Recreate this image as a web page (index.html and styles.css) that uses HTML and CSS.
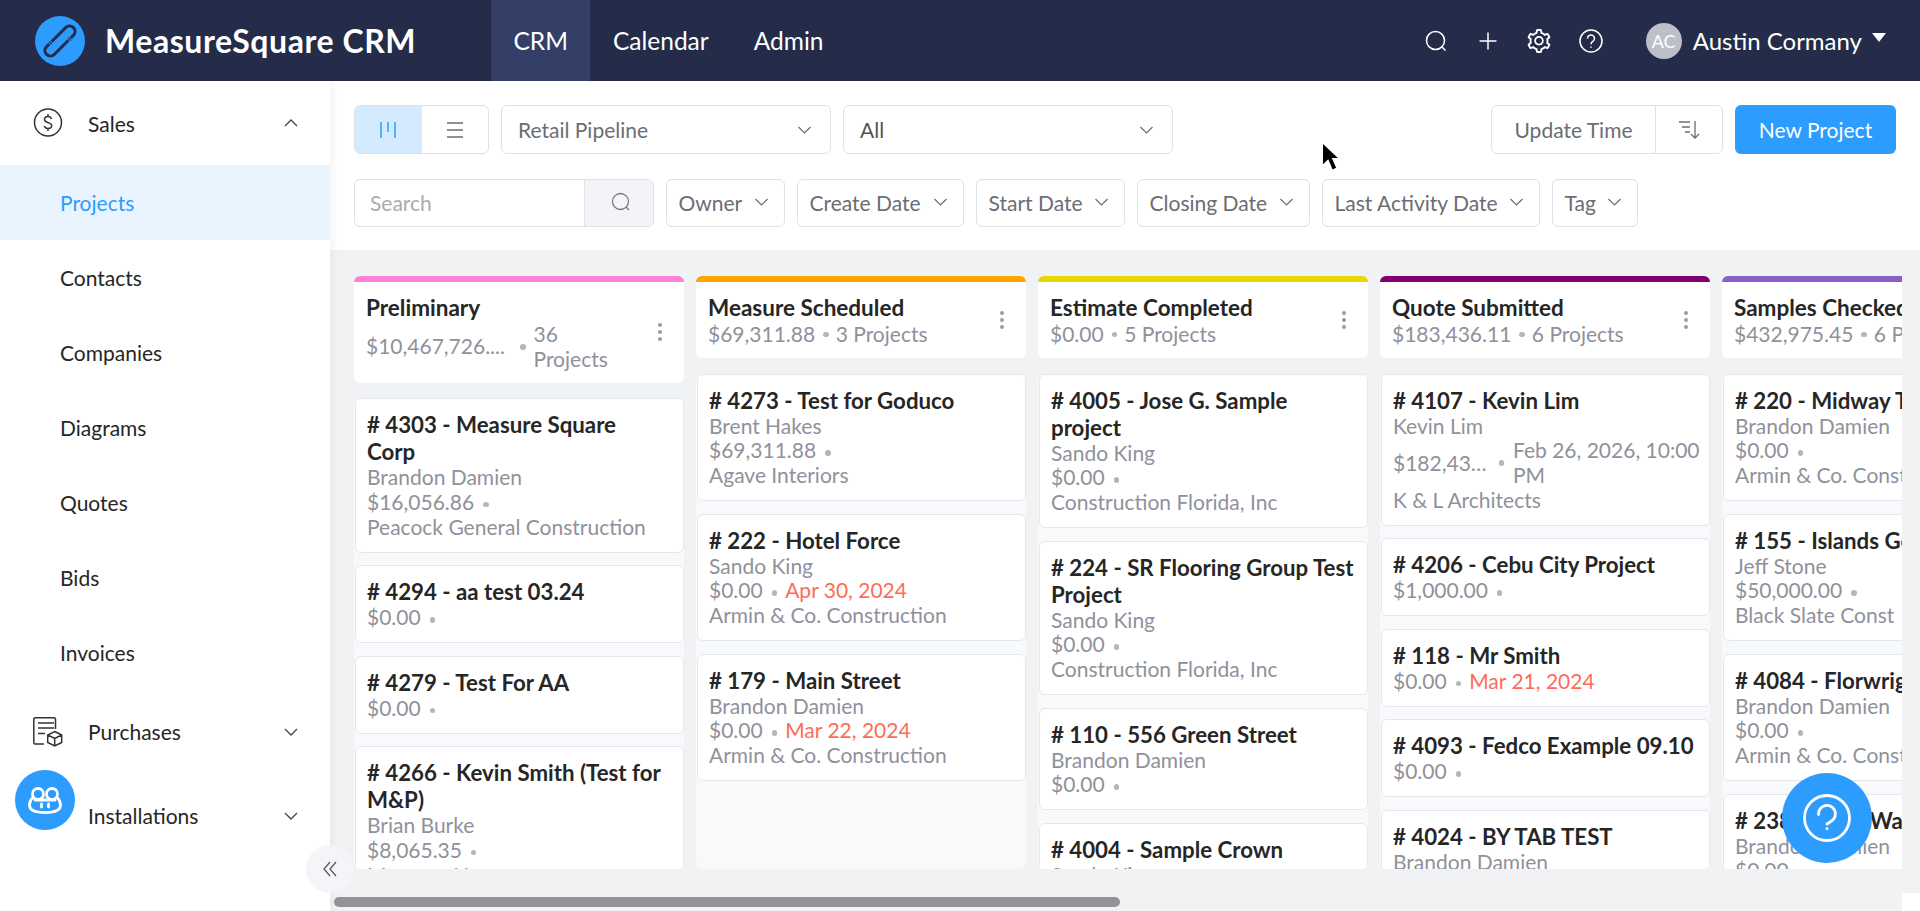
FILE: index.html
```html
<!DOCTYPE html>
<html lang="en">
<head>
<meta charset="utf-8">
<title>MeasureSquare CRM</title>
<link rel="stylesheet" href="styles.css">
</head>
<body>
<header class="topbar">
  <div class="brand">
    <span class="brand-logo">
      <svg viewBox="0 0 50 50" width="50" height="50"><circle cx="25" cy="25" r="25" fill="#2d9cff"/><g transform="translate(25 25) rotate(-45)" fill="none" stroke="#232c4a" stroke-width="3"><path d="M-9.500 -5.500H-13.500a5.500 5.500 0 0 0 0 11H6.500"/><path d="M9.500 5.500H13.500a5.500 5.500 0 0 0 0-11H-6.500"/><path d="M-8 -7.500v4M8 3.500v4" stroke-width="1.300"/></g></svg>
    </span>
    <span class="brand-name">MeasureSquare CRM</span>
  </div>
  <nav class="topnav">
    <a class="topnav-item is-active">CRM</a>
    <a class="topnav-item">Calendar</a>
    <a class="topnav-item">Admin</a>
  </nav>
  <div class="top-actions">
    <svg class="top-icon" viewBox="0 0 24 24"><circle cx="11.500" cy="11.500" r="9"/><path d="M18 18l3.500 3.500"/></svg>
    <svg class="top-icon" viewBox="0 0 24 24"><path d="M12 3.500v17M3.500 12h17"/></svg>
    <svg class="top-icon top-icon-fill" viewBox="64 64 896 896"><path d="M924.800 625.700l-65.500-56c3.100-19 4.700-38.400 4.700-57.800s-1.600-38.800-4.700-57.800l65.500-56a32.030 32.030 0 0 0 9.300-35.200l-.9-2.600a443.740 443.740 0 0 0-79.700-137.900l-1.800-2.100a32.120 32.120 0 0 0-35.100-9.500l-81.300 28.900c-30-24.600-63.500-44-99.700-57.600l-15.700-85a32.050 32.050 0 0 0-25.800-25.700l-2.700-.5c-52.100-9.400-106.900-9.400-159 0l-2.700.5a32.050 32.050 0 0 0-25.800 25.700l-15.800 85.400a351.860 351.860 0 0 0-99 57.400l-81.900-29.100a32 32 0 0 0-35.100 9.500l-1.800 2.100a446.020 446.020 0 0 0-79.700 137.900l-.9 2.600c-4.500 12.500-.8 26.500 9.300 35.200l66.300 56.600c-3.100 18.800-4.600 38-4.600 57.100 0 19.200 1.500 38.400 4.600 57.100L99 625.500a32.030 32.030 0 0 0-9.300 35.200l.9 2.600c18.100 50.400 44.900 96.900 79.700 137.900l1.800 2.100a32.120 32.120 0 0 0 35.100 9.500l81.900-29.100c29.800 24.500 63.100 43.900 99 57.400l15.800 85.400a32.050 32.050 0 0 0 25.800 25.700l2.700.5a449.400 449.400 0 0 0 159 0l2.700-.5a32.050 32.050 0 0 0 25.800-25.700l15.700-85a350 350 0 0 0 99.700-57.600l81.300 28.900a32 32 0 0 0 35.100-9.500l1.800-2.100c34.800-41.100 61.600-87.500 79.700-137.900l.9-2.600c4.500-12.300.8-26.300-9.300-35zM788.300 465.900c2.500 15.100 3.800 30.600 3.800 46.100s-1.300 31-3.800 46.100l-6.600 40.100 74.700 63.900a370.030 370.030 0 0 1-42.600 73.600L721 702.800l-31.400 25.800c-23.900 19.600-50.500 35-79.300 45.800l-38.100 14.300-17.900 97a377.500 377.500 0 0 1-85 0l-17.900-97.200-37.800-14.500c-28.500-10.800-55-26.200-78.700-45.700l-31.400-25.900-93.400 33.200c-17-22.900-31.200-47.600-42.600-73.600l75.500-64.500-6.500-40c-2.400-14.900-3.700-30.300-3.700-45.500 0-15.300 1.200-30.600 3.700-45.500l6.500-40-75.500-64.500c11.300-26.100 25.600-50.700 42.600-73.600l93.400 33.200 31.400-25.900c23.700-19.500 50.200-34.900 78.700-45.700l37.900-14.300 17.900-97.200c28.100-3.200 56.800-3.200 85 0l17.900 97 38.100 14.300c28.700 10.800 55.400 26.200 79.300 45.800l31.400 25.800 92.800-32.900c17 22.900 31.200 47.600 42.600 73.600L781.800 426l6.500 39.900zM512 326c-97.200 0-176 78.800-176 176s78.800 176 176 176 176-78.800 176-176-78.800-176-176-176zm79.200 255.200A111.600 111.600 0 0 1 512 614c-29.900 0-58-11.700-79.200-32.800A111.600 111.600 0 0 1 400 502c0-29.900 11.700-58 32.800-79.200C454 401.600 482.100 390 512 390c29.900 0 58 11.600 79.200 32.800A111.600 111.600 0 0 1 624 502c0 29.900-11.700 58-32.800 79.200z"/></svg>
    <svg class="top-icon" viewBox="0 0 24 24"><circle cx="12" cy="12" r="11"/><path d="M8.500 9.500a3.500 3.500 0 1 1 5.400 2.900c-1.200.8-1.900 1.400-1.900 2.800"/><path d="M12 17.500v1.200"/></svg>
    <div class="user">
      <span class="avatar">AC</span>
      <span class="user-name">Austin Cormany</span>
      <span class="caret"></span>
    </div>
  </div>
</header>

<div class="shell">
  <aside class="sidebar">
    <div class="side-group">
      <svg class="side-icon" viewBox="0 0 30 30"><circle cx="15" cy="14.500" r="13.500"/><path d="M18.500 11c-.5-1.500-1.800-2.500-3.500-2.500-2 0-3.500 1.200-3.500 3 0 4 7.200 2.300 7.200 6 0 1.800-1.600 3-3.700 3-1.800 0-3.200-1-3.700-2.500M15 6v2.500M15 20.500V23"/></svg>
      <span class="side-label">Sales</span>
      <svg class="side-chev" viewBox="0 0 14 8"><path d="M1 7l6-6 6 6"/></svg>
    </div>
    <a class="side-link is-current">Projects</a>
    <a class="side-link">Contacts</a>
    <a class="side-link">Companies</a>
    <a class="side-link">Diagrams</a>
    <a class="side-link">Quotes</a>
    <a class="side-link">Bids</a>
    <a class="side-link">Invoices</a>
    <div class="side-group side-purchases">
      <svg class="side-icon" viewBox="0 0 30 30"><path d="M11 27H2A1.500 1.500 0 0 1 .8 25.500V2A1.500 1.500 0 0 1 2 .8h19A1.500 1.500 0 0 1 22.500 2v10M5 6h16M5 11h16M5 16.500h7"/><path d="M21.700 14.500l7 3.500v7.500l-7 3.500-7-3.500V18zM14.700 18l7 3.500 7-3.500M21.700 21.500V29"/></svg>
      <span class="side-label">Purchases</span>
      <svg class="side-chev" viewBox="0 0 14 8"><path d="M1 1l6 6 6-6"/></svg>
    </div>
    <div class="side-group side-installs">
      <span class="side-icon-slot"></span>
      <span class="side-label">Installations</span>
      <svg class="side-chev" viewBox="0 0 14 8"><path d="M1 1l6 6 6-6"/></svg>
    </div>
  </aside>

  <main class="content">
    <section class="toolbar">
      <div class="tool-row">
        <div class="view-toggle">
          <span class="view-btn is-on"><svg viewBox="0 0 16 16" width="16" height="16"><path d="M1 0v16M8 0v10M15 0v16"/></svg></span>
          <span class="view-btn"><svg viewBox="0 0 16 16" width="16" height="16"><path d="M0 1h16M0 8h16M0 15h16"/></svg></span>
        </div>
        <div class="select"><span>Retail Pipeline</span><svg class="chev" viewBox="0 0 14 8"><path d="M1 1l6 6 6-6"/></svg></div>
        <div class="select"><span class="select-dark">All</span><svg class="chev" viewBox="0 0 14 8"><path d="M1 1l6 6 6-6"/></svg></div>
        <div class="tool-spacer"></div>
        <div class="sort-group">
          <span class="sort-label">Update Time</span>
          <span class="sort-icon"><svg viewBox="0 0 22 20" width="22" height="20"><path d="M1 2h11M4 7h8M7 12h5M17 1v17M13 14l4 4 4-4"/></svg></span>
        </div>
        <button class="primary">New Project</button>
      </div>
      <div class="tool-row tool-row-filters">
        <div class="search">
          <span class="search-text">Search</span>
          <span class="search-btn"><svg viewBox="0 0 20 20" width="20" height="20"><circle cx="9.500" cy="9.500" r="8"/><path d="M15 15l3 3"/></svg></span>
        </div>
        <div class="filter w-owner">Owner<svg class="chev" viewBox="0 0 14 8"><path d="M1 1l6 6 6-6"/></svg></div>
        <div class="filter w-create">Create Date<svg class="chev" viewBox="0 0 14 8"><path d="M1 1l6 6 6-6"/></svg></div>
        <div class="filter w-start">Start Date<svg class="chev" viewBox="0 0 14 8"><path d="M1 1l6 6 6-6"/></svg></div>
        <div class="filter w-close">Closing Date<svg class="chev" viewBox="0 0 14 8"><path d="M1 1l6 6 6-6"/></svg></div>
        <div class="filter w-last">Last Activity Date<svg class="chev" viewBox="0 0 14 8"><path d="M1 1l6 6 6-6"/></svg></div>
        <div class="filter w-tag">Tag<svg class="chev" viewBox="0 0 14 8"><path d="M1 1l6 6 6-6"/></svg></div>
      </div>
    </section>

    <section class="board">
      <div class="lanes">

        <div class="lane">
          <div class="lane-head c-pink">
            <div class="lane-info">
              <div class="lane-title">Preliminary</div>
              <div class="lane-meta"><span class="lane-sum">$10,467,726....</span><i class="dot dot-gap"></i><span class="lane-count">36 Projects</span></div>
            </div>
            <span class="kebab"><i></i><i></i><i></i></span>
          </div>
          <div class="cards">
            <article class="card"><h3># 4303 - Measure Square<br>Corp</h3><p>Brandon Damien</p><p>$16,056.86<i class="dot"></i></p><p>Peacock General Construction</p></article>
            <article class="card"><h3># 4294 - aa test 03.24</h3><p>$0.00<i class="dot"></i></p></article>
            <article class="card"><h3># 4279 - Test For AA</h3><p>$0.00<i class="dot"></i></p></article>
            <article class="card"><h3># 4266 - Kevin Smith (Test for M&amp;P)</h3><p>Brian Burke</p><p>$8,065.35<i class="dot"></i></p><p>Manager Homes</p></article>
          </div>
        </div>

        <div class="lane">
          <div class="lane-head c-orange">
            <div class="lane-info">
              <div class="lane-title">Measure Scheduled</div>
              <div class="lane-meta">$69,311.88<i class="dot"></i>3 Projects</div>
            </div>
            <span class="kebab"><i></i><i></i><i></i></span>
          </div>
          <div class="cards">
            <article class="card"><h3># 4273 - Test for Goduco</h3><p>Brent Hakes</p><p>$69,311.88<i class="dot"></i></p><p>Agave Interiors</p></article>
            <article class="card"><h3># 222 - Hotel Force</h3><p>Sando King</p><p>$0.00<i class="dot"></i><em>Apr 30, 2024</em></p><p>Armin &amp; Co. Construction</p></article>
            <article class="card"><h3># 179 - Main Street</h3><p>Brandon Damien</p><p>$0.00<i class="dot"></i><em>Mar 22, 2024</em></p><p>Armin &amp; Co. Construction</p></article>
          </div>
        </div>

        <div class="lane">
          <div class="lane-head c-yellow">
            <div class="lane-info">
              <div class="lane-title">Estimate Completed</div>
              <div class="lane-meta">$0.00<i class="dot"></i>5 Projects</div>
            </div>
            <span class="kebab"><i></i><i></i><i></i></span>
          </div>
          <div class="cards">
            <article class="card"><h3># 4005 - Jose G. Sample project</h3><p>Sando King</p><p>$0.00<i class="dot"></i></p><p>Construction Florida, Inc</p></article>
            <article class="card"><h3># 224 - SR Flooring Group Test Project</h3><p>Sando King</p><p>$0.00<i class="dot"></i></p><p>Construction Florida, Inc</p></article>
            <article class="card"><h3># 110 - 556 Green Street</h3><p>Brandon Damien</p><p>$0.00<i class="dot"></i></p></article>
            <article class="card"><h3># 4004 - Sample Crown</h3><p>Sando King</p><p>$0.00<i class="dot"></i></p></article>
          </div>
        </div>

        <div class="lane">
          <div class="lane-head c-purple">
            <div class="lane-info">
              <div class="lane-title">Quote Submitted</div>
              <div class="lane-meta">$183,436.11<i class="dot"></i>6 Projects</div>
            </div>
            <span class="kebab"><i></i><i></i><i></i></span>
          </div>
          <div class="cards">
            <article class="card"><h3># 4107 - Kevin Lim</h3><p>Kevin Lim</p><p class="split"><span class="clip">$182,436.11</span><i class="dot"></i><span class="split-date">Feb 26, 2026, 10:00 PM</span></p><p>K &amp; L Architects</p></article>
            <article class="card"><h3># 4206 - Cebu City Project</h3><p>$1,000.00<i class="dot"></i></p></article>
            <article class="card"><h3># 118 - Mr Smith</h3><p>$0.00<i class="dot"></i><em>Mar 21, 2024</em></p></article>
            <article class="card"><h3># 4093 - Fedco Example 09.10</h3><p>$0.00<i class="dot"></i></p></article>
            <article class="card"><h3># 4024 - BY TAB TEST</h3><p>Brandon Damien</p><p>$0.00<i class="dot"></i></p></article>
          </div>
        </div>

        <div class="lane">
          <div class="lane-head c-violet">
            <div class="lane-info">
              <div class="lane-title">Samples Checked</div>
              <div class="lane-meta">$432,975.45<i class="dot"></i>6 Projects</div>
            </div>
            <span class="kebab"><i></i><i></i><i></i></span>
          </div>
          <div class="cards">
            <article class="card"><h3># 220 - Midway Tower</h3><p>Brandon Damien</p><p>$0.00<i class="dot"></i></p><p>Armin &amp; Co. Construction</p></article>
            <article class="card"><h3># 155 - Islands Golf</h3><p>Jeff Stone</p><p>$50,000.00<i class="dot"></i></p><p>Black Slate Const</p></article>
            <article class="card"><h3># 4084 - Florwright</h3><p>Brandon Damien</p><p>$0.00<i class="dot"></i></p><p>Armin &amp; Co. Construction</p></article>
            <article class="card"><h3># 238 - Ware Warehouse</h3><p>Brandon Damien</p><p>$0.00<i class="dot"></i></p></article>
          </div>
        </div>

      </div>
      <div class="hscroll">
        <div class="hscroll-track"><div class="hscroll-thumb"></div></div>
        <div class="hscroll-corner"></div>
      </div>
    </section>
  </main>
</div>

<button class="collapse"><svg viewBox="0 0 14 16" width="14" height="16"><path d="M7 1L1 8l6 7M13 1L7 8l6 7"/></svg></button>
<span class="bot">
  <svg viewBox="0 0 60 60" width="60" height="60"><g fill="none" stroke="#fff" stroke-width="2.800" stroke-linecap="round"><circle cx="23" cy="24" r="5.500"/><circle cx="37" cy="24" r="5.500"/><path d="M18 27.500C15 30 14.500 32.500 14.500 35c0 5 6 7.500 15.500 7.500S45.500 40 45.500 35c0-2.500-.5-5-3.500-7.500"/><path d="M20 30h20"/><path d="M26.500 34v3M33.500 34v3"/></g></svg>
</span>
<span class="help">
  <svg viewBox="0 0 48 48" width="48" height="48"><circle cx="24" cy="24" r="22.500"/><path d="M15.500 20.500a8.500 8.500 0 1 1 13 6.500c-3 1.900-4.500 3-4.500 3"/><path d="M24 34.700v.1"/></svg>
</span>
<svg class="cursor" viewBox="0 0 18 32" width="16" height="28"><path d="M1 0v23l6-5.500 5 11.500 4-2-5-11h7z" fill="#000"/></svg>
</body>
</html>
```

FILE: styles.css
```css
* { box-sizing: border-box; }
html, body { margin: 0; height: 100%; }
body {
  width: 1920px;
  height: 911px;
  overflow: hidden;
  font-family: Lato, "Noto Sans", sans-serif;
  font-size: 21px;
  color: #262626;
  background: #fff;
  position: relative;
  display: flex;
  flex-direction: column;
}

/* top bar */
.topbar {
  height: 81px;
  flex: none;
  display: flex;
  align-items: stretch;
  background: #242c4a;
  color: #fff;
}
.brand { width: 491px; display: flex; align-items: center; padding-left: 35px; }
.brand-logo { width: 50px; height: 50px; display: block; }
.brand-name { margin-left: 20px; font-size: 32px; font-weight: 700; letter-spacing: .55px; white-space: nowrap; }
.topnav { display: flex; }
.topnav-item { display: flex; align-items: center; padding: 0 22.500px; font-size: 24.500px; }
.topnav-item.is-active { background: #343f68; }
.top-actions { margin-left: auto; display: flex; align-items: center; padding-right: 34px; }
.top-icon { width: 24px; height: 24px; fill: none; stroke: #fff; stroke-width: 1.500; margin-right: 27.500px; }
.top-icon-fill { fill: #fff; stroke: none; }
.user { display: flex; align-items: center; margin-left: 15.500px; }
.avatar { width: 36px; height: 36px; border-radius: 50%; background: #bdc0c9; color: #fff; display: flex; align-items: center; justify-content: center; font-size: 18px; }
.user-name { margin-left: 11px; font-size: 24px; }
.caret { margin-left: 10px; margin-bottom: 6px; width: 0; height: 0; border-left: 7px solid transparent; border-right: 7px solid transparent; border-top: 9px solid #fff; }

/* layout */
.shell { flex: 1; display: flex; min-height: 0; }
.sidebar { width: 330px; flex: none; background: #fff; z-index: 2; box-shadow: 2px 0 8px rgba(30, 40, 70, .06); }
.side-group { display: flex; align-items: center; padding-left: 33px; height: 84px; color: #262626; }
.side-icon { width: 30px; height: 30px; fill: none; stroke: #333; stroke-width: 1.500; flex: none; }
.side-icon-slot { width: 30px; height: 30px; flex: none; }
.side-label { margin-left: 25px; flex: 1; }
.side-chev { width: 14px; height: 8px; fill: none; stroke: #444; stroke-width: 1.300; margin-right: 32px; }
.side-link { display: flex; align-items: center; height: 75px; padding-left: 60px; color: #262626; }
.side-link.is-current { background: #e9f4ff; color: #2d9cff; }
.side-purchases { height: 83px; }
.side-installs { height: 85px; }

/* content */
.content { flex: 1; min-width: 0; display: flex; flex-direction: column; }
.toolbar { height: 169px; flex: none; padding: 24px 24px 0; }
.tool-row { display: flex; align-items: stretch; gap: 12px; height: 49px; }
.tool-row-filters { margin-top: 25px; height: 48px; }
.tool-spacer { flex: 1; }
.view-toggle { width: 135px; display: flex; border: 1px solid #dfe1ea; border-radius: 6px; overflow: hidden; }
.view-btn { flex: 1; display: flex; align-items: center; justify-content: center; }
.view-btn svg { fill: none; stroke: #6b6d75; stroke-width: 1.500; }
.view-btn.is-on { background: #d3eaff; }
.view-btn.is-on svg { stroke: #2d9cff; }
.select { width: 330px; display: flex; align-items: center; justify-content: space-between; padding: 0 18px 0 16px; border: 1px solid #dfe1ea; border-radius: 6px; color: #6b6d75; }
.select-dark { color: #555; }
.chev { width: 15px; height: 8px; fill: none; stroke: #6b6d75; stroke-width: 1.200; flex: none; }
.sort-group { width: 232px; display: flex; border: 1px solid #dfe1ea; border-radius: 6px; color: #6b6d75; }
.sort-label { flex: 1; display: flex; align-items: center; justify-content: center; }
.sort-icon { width: 67px; border-left: 1px solid #dfe1ea; display: flex; align-items: center; justify-content: center; }
.sort-icon svg { fill: none; stroke: #6b6d75; stroke-width: 1.300; }
.primary { width: 161px; border: 0; border-radius: 6px; background: #2d9cff; color: #fff; font: inherit; padding: 0; }
.search { width: 300px; display: flex; border: 1px solid #dfe1ea; border-radius: 6px; overflow: hidden; }
.search-text { flex: 1; display: flex; align-items: center; padding: 0 0 2px 15px; color: #a9abb3; }
.search-btn { width: 69px; background: #f3f4f8; border-left: 1px solid #dfe1ea; display: flex; align-items: center; justify-content: center; padding: 0 0 2px 4px; }
.search-btn svg { fill: none; stroke: #777; stroke-width: 1.300; }
.filter { display: flex; align-items: center; justify-content: space-between; padding: 0 15px 2px 11.500px; border: 1px solid #dfe1ea; border-radius: 6px; color: #6b6d75; white-space: nowrap; }
.w-owner { width: 119px; }
.w-create { width: 167px; }
.w-start { width: 149px; }
.w-close { width: 173px; }
.w-last { width: 218px; }
.w-tag { width: 86px; }

/* board */
.board { flex: 1; min-height: 0; display: flex; flex-direction: column; background: #f1f2f4; }
.lanes { flex: 1; min-height: 0; margin: 0 18px 24px 24px; padding-top: 26px; display: flex; gap: 12px; overflow: hidden; }
.lane { width: 330px; flex: none; display: flex; flex-direction: column; }
.lane-head { flex: none; display: flex; align-items: center; background: #fff; border-top: 6px solid; border-radius: 6px; padding: 12px 22px 12px 12px; }
.c-pink { border-color: #ff80db; }
.c-orange { border-color: #ffa500; }
.c-yellow { border-color: #e8d800; }
.c-purple { border-color: #800073; }
.c-violet { border-color: #8a5fc9; }
.lane-info { flex: 1; min-width: 0; }
.lane-title { font-size: 22.500px; font-weight: 700; line-height: 27px; white-space: nowrap; }
.lane-meta { display: flex; align-items: center; color: #8f919b; line-height: 24.750px; white-space: nowrap; position: relative; top: 1px; }
.lane-meta .dot { margin: 0 7px 0 8px; }
.lane-sum { width: 154px; flex: none; }
.lane-count { white-space: normal; width: 90px; }
.dot { display: inline-block; width: 5.500px; height: 5.500px; border-radius: 50%; background: #b5b6bd; margin: 0 8px 0 9px; flex: none; vertical-align: middle; }
.lane-meta .dot-gap { margin: 0 8px 0 0; }
.kebab { display: flex; flex-direction: column; gap: 3px; flex: none; margin-left: 8px; }
.kebab i { display: block; width: 4px; height: 4px; border-radius: 50%; background: #9a9ca5; }
.cards { flex: 1; min-height: 0; margin-top: 15.750px; padding: 0 .5px; background: #f8f9fa; border-radius: 6px; display: flex; flex-direction: column; gap: 12.750px; overflow: hidden; }
.card { flex: none; background: #fff; border: 1px solid #e5e7ef; border-radius: 6px; padding: 12px 11.500px; }
.card h3 { margin: 0; font-size: 22.250px; font-weight: 700; line-height: 27px; color: #262626; }
.card p { margin: 0; line-height: 24.750px; color: #8f919b; white-space: nowrap; }
.card em { font-style: normal; color: #ff6b57; }
.split { display: flex; align-items: center; }
.split .dot { margin: 0 9px 0 5.500px; }
.clip { width: 100px; flex: none; overflow: hidden; text-overflow: ellipsis; }
.split-date { white-space: normal; margin-right: -5px; }

.hscroll { flex: none; height: 18px; display: flex; }
.hscroll-track { flex: 1; padding: 4px 0 4px 4px; }
.hscroll-thumb { width: 786px; height: 10px; border-radius: 5px; background: #939497; }
.hscroll-corner { width: 18px; background: #fff; }

/* floating */
.collapse { position: absolute; left: 306px; top: 845px; width: 48px; height: 48px; border-radius: 50%; border: 0; background: #f4f5f8; padding: 0; display: flex; align-items: center; justify-content: center; z-index: 3; }
.collapse svg { fill: none; stroke: #555; stroke-width: 1.200; }
.bot { position: absolute; left: 15px; top: 770px; width: 60px; height: 60px; border-radius: 50%; background: #2d9cff; display: block; z-index: 4; }
.bot svg { display: block; }
.help { position: absolute; left: 1782px; top: 773px; width: 90px; height: 90px; border-radius: 50%; background: #2d9cff; display: flex; align-items: center; justify-content: center; z-index: 4; }
.help svg { fill: none; stroke: #fff; stroke-width: 2.800; stroke-linecap: round; }
.cursor { position: absolute; left: 1322px; top: 144px; z-index: 5; }
```
